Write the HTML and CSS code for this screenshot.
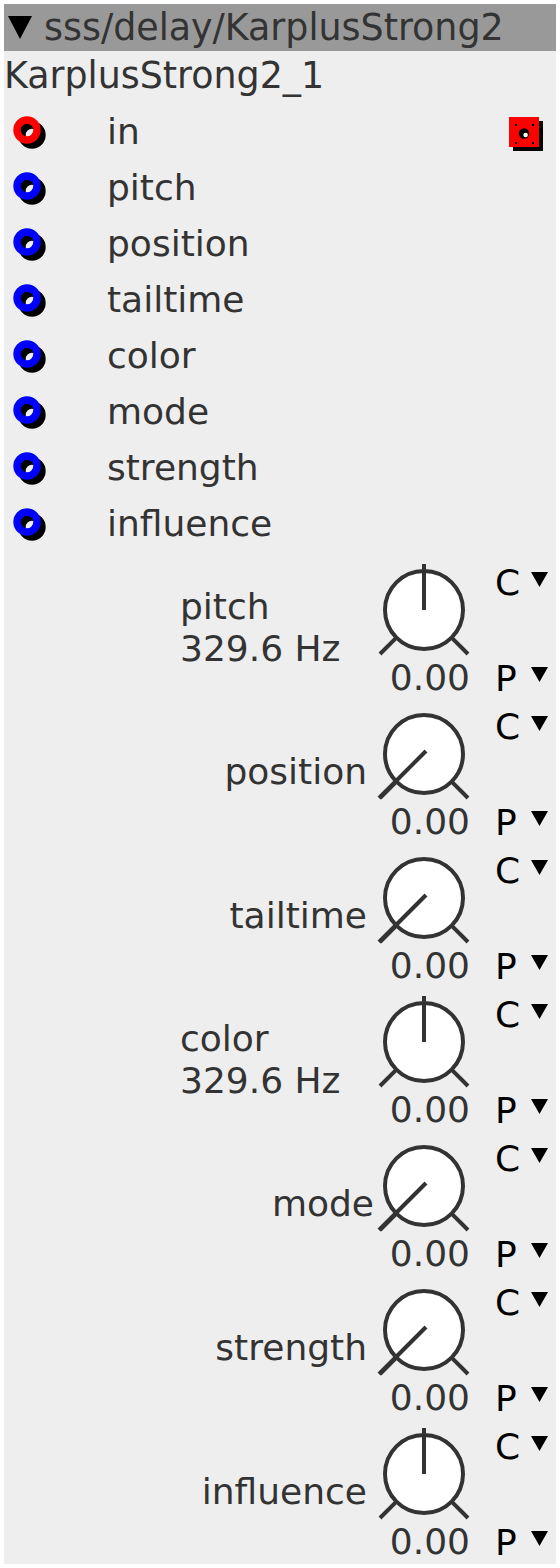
FILE: index.html
```html
<!DOCTYPE html>
<html>
<head>
<meta charset="utf-8">
<link rel="stylesheet" href="styles.css">
</head>
<body>
<div class="panel">
  <div class="header">
    <svg class="tri-big" width="24" height="23" viewBox="0 0 24 23"><polygon points="0,0 24,0 12,23" fill="#000"/></svg>
    <span class="title">sss/delay/KarplusStrong2</span>
  </div>
  <div class="name">KarplusStrong2_1</div>
  <div class="inlets">
    <div class="inlet">
      <svg class="jack" width="40" height="40" viewBox="0 0 40 40"><circle cx="24" cy="23" r="10" fill="none" stroke="#000" stroke-width="7.4"/><circle cx="19" cy="18" r="10" fill="none" stroke="#f00" stroke-width="7.4"/></svg>
      <span class="ilabel">in</span>
      <span class="spacer"></span>
      <svg class="outlet" width="40" height="40" viewBox="0 0 40 40"><rect x="8" y="9" width="30" height="30" fill="#000"/><rect x="4" y="5" width="30" height="30" fill="#f00"/><rect x="10" y="12" width="2" height="2" fill="#000"/><rect x="27" y="12" width="2" height="2" fill="#000"/><rect x="10" y="30" width="2" height="2" fill="#000"/><rect x="27" y="30" width="2" height="2" fill="#000"/><circle cx="19" cy="21.5" r="5.2" fill="#000"/><circle cx="20.6" cy="23" r="2.3" fill="#fff"/></svg>
    </div>
    <div class="inlet">
      <svg class="jack" width="40" height="40" viewBox="0 0 40 40"><circle cx="24" cy="23" r="10" fill="none" stroke="#000" stroke-width="7.4"/><circle cx="19" cy="18" r="10" fill="none" stroke="#00f" stroke-width="7.4"/></svg>
      <span class="ilabel">pitch</span>
    </div>
    <div class="inlet">
      <svg class="jack" width="40" height="40" viewBox="0 0 40 40"><circle cx="24" cy="23" r="10" fill="none" stroke="#000" stroke-width="7.4"/><circle cx="19" cy="18" r="10" fill="none" stroke="#00f" stroke-width="7.4"/></svg>
      <span class="ilabel">position</span>
    </div>
    <div class="inlet">
      <svg class="jack" width="40" height="40" viewBox="0 0 40 40"><circle cx="24" cy="23" r="10" fill="none" stroke="#000" stroke-width="7.4"/><circle cx="19" cy="18" r="10" fill="none" stroke="#00f" stroke-width="7.4"/></svg>
      <span class="ilabel">tailtime</span>
    </div>
    <div class="inlet">
      <svg class="jack" width="40" height="40" viewBox="0 0 40 40"><circle cx="24" cy="23" r="10" fill="none" stroke="#000" stroke-width="7.4"/><circle cx="19" cy="18" r="10" fill="none" stroke="#00f" stroke-width="7.4"/></svg>
      <span class="ilabel">color</span>
    </div>
    <div class="inlet">
      <svg class="jack" width="40" height="40" viewBox="0 0 40 40"><circle cx="24" cy="23" r="10" fill="none" stroke="#000" stroke-width="7.4"/><circle cx="19" cy="18" r="10" fill="none" stroke="#00f" stroke-width="7.4"/></svg>
      <span class="ilabel">mode</span>
    </div>
    <div class="inlet">
      <svg class="jack" width="40" height="40" viewBox="0 0 40 40"><circle cx="24" cy="23" r="10" fill="none" stroke="#000" stroke-width="7.4"/><circle cx="19" cy="18" r="10" fill="none" stroke="#00f" stroke-width="7.4"/></svg>
      <span class="ilabel">strength</span>
    </div>
    <div class="inlet">
      <svg class="jack" width="40" height="40" viewBox="0 0 40 40"><circle cx="24" cy="23" r="10" fill="none" stroke="#000" stroke-width="7.4"/><circle cx="19" cy="18" r="10" fill="none" stroke="#00f" stroke-width="7.4"/></svg>
      <span class="ilabel">influence</span>
    </div>
  </div>

  <div class="params">
    <div class="param">
      <div class="plabel two"><div>pitch<br>329.6 Hz</div></div>
      <div class="knobcol">
        <svg class="knob" width="96" height="96" viewBox="0 0 96 96"><circle cx="48" cy="50" r="39" fill="#fff" stroke="#333" stroke-width="4"/><line x1="20.4" y1="77.6" x2="4" y2="94" stroke="#333" stroke-width="4"/><line x1="75.6" y1="77.6" x2="92" y2="94" stroke="#333" stroke-width="4"/><line x1="48" y1="50" x2="48" y2="4" stroke="#333" stroke-width="4"/></svg>
        <div class="val">0.00</div>
      </div>
      <div class="cp">
        <div class="cpline c"><span class="letter">C</span><svg width="17" height="15" viewBox="0 0 17 15"><polygon points="0,0 17,0 8.5,15" fill="#000"/></svg></div>
        <div class="cpline p"><span class="letter">P</span><svg width="17" height="15" viewBox="0 0 17 15"><polygon points="0,0 17,0 8.5,15" fill="#000"/></svg></div>
      </div>
    </div>

    <div class="param">
      <div class="plabel"><div>position</div></div>
      <div class="knobcol">
        <svg class="knob" width="96" height="96" viewBox="0 0 96 96"><circle cx="48" cy="50" r="39" fill="#fff" stroke="#333" stroke-width="4"/><line x1="20.4" y1="77.6" x2="4" y2="94" stroke="#333" stroke-width="4"/><line x1="75.6" y1="77.6" x2="92" y2="94" stroke="#333" stroke-width="4"/><line x1="50" y1="47" x2="3" y2="94" stroke="#333" stroke-width="4"/></svg>
        <div class="val">0.00</div>
      </div>
      <div class="cp">
        <div class="cpline c"><span class="letter">C</span><svg width="17" height="15" viewBox="0 0 17 15"><polygon points="0,0 17,0 8.5,15" fill="#000"/></svg></div>
        <div class="cpline p"><span class="letter">P</span><svg width="17" height="15" viewBox="0 0 17 15"><polygon points="0,0 17,0 8.5,15" fill="#000"/></svg></div>
      </div>
    </div>

    <div class="param">
      <div class="plabel"><div>tailtime</div></div>
      <div class="knobcol">
        <svg class="knob" width="96" height="96" viewBox="0 0 96 96"><circle cx="48" cy="50" r="39" fill="#fff" stroke="#333" stroke-width="4"/><line x1="20.4" y1="77.6" x2="4" y2="94" stroke="#333" stroke-width="4"/><line x1="75.6" y1="77.6" x2="92" y2="94" stroke="#333" stroke-width="4"/><line x1="50" y1="47" x2="3" y2="94" stroke="#333" stroke-width="4"/></svg>
        <div class="val">0.00</div>
      </div>
      <div class="cp">
        <div class="cpline c"><span class="letter">C</span><svg width="17" height="15" viewBox="0 0 17 15"><polygon points="0,0 17,0 8.5,15" fill="#000"/></svg></div>
        <div class="cpline p"><span class="letter">P</span><svg width="17" height="15" viewBox="0 0 17 15"><polygon points="0,0 17,0 8.5,15" fill="#000"/></svg></div>
      </div>
    </div>

    <div class="param">
      <div class="plabel two"><div>color<br>329.6 Hz</div></div>
      <div class="knobcol">
        <svg class="knob" width="96" height="96" viewBox="0 0 96 96"><circle cx="48" cy="50" r="39" fill="#fff" stroke="#333" stroke-width="4"/><line x1="20.4" y1="77.6" x2="4" y2="94" stroke="#333" stroke-width="4"/><line x1="75.6" y1="77.6" x2="92" y2="94" stroke="#333" stroke-width="4"/><line x1="48" y1="50" x2="48" y2="4" stroke="#333" stroke-width="4"/></svg>
        <div class="val">0.00</div>
      </div>
      <div class="cp">
        <div class="cpline c"><span class="letter">C</span><svg width="17" height="15" viewBox="0 0 17 15"><polygon points="0,0 17,0 8.5,15" fill="#000"/></svg></div>
        <div class="cpline p"><span class="letter">P</span><svg width="17" height="15" viewBox="0 0 17 15"><polygon points="0,0 17,0 8.5,15" fill="#000"/></svg></div>
      </div>
    </div>

    <div class="param">
      <div class="plabel wide"><div>mode</div></div>
      <div class="knobcol">
        <svg class="knob" width="96" height="96" viewBox="0 0 96 96"><circle cx="48" cy="50" r="39" fill="#fff" stroke="#333" stroke-width="4"/><line x1="20.4" y1="77.6" x2="4" y2="94" stroke="#333" stroke-width="4"/><line x1="75.6" y1="77.6" x2="92" y2="94" stroke="#333" stroke-width="4"/><line x1="50" y1="47" x2="3" y2="94" stroke="#333" stroke-width="4"/></svg>
        <div class="val">0.00</div>
      </div>
      <div class="cp">
        <div class="cpline c"><span class="letter">C</span><svg width="17" height="15" viewBox="0 0 17 15"><polygon points="0,0 17,0 8.5,15" fill="#000"/></svg></div>
        <div class="cpline p"><span class="letter">P</span><svg width="17" height="15" viewBox="0 0 17 15"><polygon points="0,0 17,0 8.5,15" fill="#000"/></svg></div>
      </div>
    </div>

    <div class="param">
      <div class="plabel"><div>strength</div></div>
      <div class="knobcol">
        <svg class="knob" width="96" height="96" viewBox="0 0 96 96"><circle cx="48" cy="50" r="39" fill="#fff" stroke="#333" stroke-width="4"/><line x1="20.4" y1="77.6" x2="4" y2="94" stroke="#333" stroke-width="4"/><line x1="75.6" y1="77.6" x2="92" y2="94" stroke="#333" stroke-width="4"/><line x1="50" y1="47" x2="3" y2="94" stroke="#333" stroke-width="4"/></svg>
        <div class="val">0.00</div>
      </div>
      <div class="cp">
        <div class="cpline c"><span class="letter">C</span><svg width="17" height="15" viewBox="0 0 17 15"><polygon points="0,0 17,0 8.5,15" fill="#000"/></svg></div>
        <div class="cpline p"><span class="letter">P</span><svg width="17" height="15" viewBox="0 0 17 15"><polygon points="0,0 17,0 8.5,15" fill="#000"/></svg></div>
      </div>
    </div>

    <div class="param">
      <div class="plabel"><div>influence</div></div>
      <div class="knobcol">
        <svg class="knob" width="96" height="96" viewBox="0 0 96 96"><circle cx="48" cy="50" r="39" fill="#fff" stroke="#333" stroke-width="4"/><line x1="20.4" y1="77.6" x2="4" y2="94" stroke="#333" stroke-width="4"/><line x1="75.6" y1="77.6" x2="92" y2="94" stroke="#333" stroke-width="4"/><line x1="48" y1="50" x2="48" y2="4" stroke="#333" stroke-width="4"/></svg>
        <div class="val">0.00</div>
      </div>
      <div class="cp">
        <div class="cpline c"><span class="letter">C</span><svg width="17" height="15" viewBox="0 0 17 15"><polygon points="0,0 17,0 8.5,15" fill="#000"/></svg></div>
        <div class="cpline p"><span class="letter">P</span><svg width="17" height="15" viewBox="0 0 17 15"><polygon points="0,0 17,0 8.5,15" fill="#000"/></svg></div>
      </div>
    </div>
  </div>
</div>
</body>
</html>
```

FILE: styles.css
```css
html, body {
  margin: 0;
  padding: 0;
  background: #fff;
}
body {
  padding: 4px;
  font-family: "DejaVu Sans", sans-serif;
  color: #333;
}
.panel {
  width: 552px;
  height: 1560px;
  background: #eeeeee;
  overflow: hidden;
}
.header {
  height: 47px;
  background: #999999;
  display: flex;
  align-items: center;
}
.tri-big {
  display: block;
  margin-left: 4px;
  flex: none;
}
.title {
  margin-left: 12px;
  font-size: 36.4px;
  line-height: 47px;
  white-space: nowrap;
}
.name {
  height: 53px;
  font-size: 36.4px;
  line-height: 50px;
  white-space: nowrap;
}
.inlet {
  height: 56px;
  display: flex;
  align-items: center;
}
.jack {
  display: block;
  margin-left: 4px;
  flex: none;
}
.ilabel {
  margin-left: 59px;
  font-size: 36px;
  line-height: 56px;
}
.spacer {
  flex: 1;
}
.outlet {
  display: block;
  margin-right: 11px;
}
.params {
  margin-top: 4px;
}
.param {
  height: 144px;
  display: flex;
}
.plabel {
  width: 363px;
  flex: none;
  display: flex;
  align-items: center;
  justify-content: flex-end;
  padding-right: 9px;
  font-size: 36px;
  line-height: 42px;
  white-space: nowrap;
}
.plabel.two {
  justify-content: flex-start;
  width: 196px;
  padding-left: 176px;
  padding-right: 0;
}
.plabel.wide {
  width: 370px;
  padding-right: 2px;
}
.knobcol {
  width: 96px;
  flex: none;
  display: flex;
  flex-direction: column;
}
.knob {
  display: block;
  margin-top: 4px;
}
.val {
  margin-top: 2px;
  font-size: 36px;
  line-height: 40px;
  text-align: right;
  padding-right: 2px;
}
.cp {
  flex: 1;
  display: flex;
  flex-direction: column;
  justify-content: space-between;
  padding: 7px 0 1px 23px;
  color: #000;
  font-size: 36px;
  line-height: 40px;
}
.cpline {
  display: flex;
  align-items: flex-start;
}
.letter {
  width: 36px;
}
.cpline svg {
  display: block;
  margin-top: 9px;
}
.cpline.p svg {
  margin-top: 8px;
}
```
